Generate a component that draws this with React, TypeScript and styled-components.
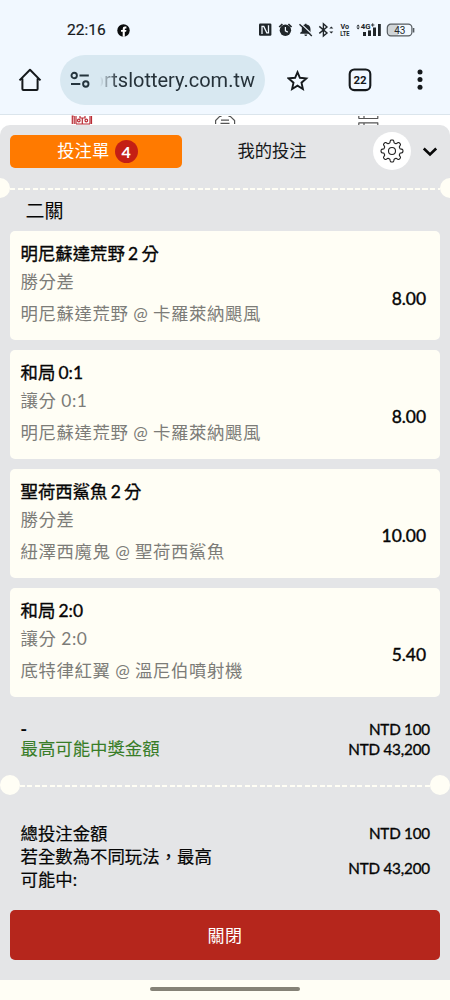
import React from 'react';
import styled, { createGlobalStyle } from 'styled-components';

const GlobalStyle = createGlobalStyle`
  * { box-sizing: border-box; }
  body { margin: 0; background: #fffef5; }
`;

const Screen = styled.div`
  width: 450px;
  height: 1000px;
  overflow: hidden;
  display: flex;
  flex-direction: column;
  background: #fffef5;
  font-family: Lato, 'Noto Sans CJK TC', sans-serif;
  color: #050505;
`;

const StatusBar = styled.div`
  height: 55px;
  flex: none;
  padding: 5px 34px 0 67px;
  display: flex;
  align-items: center;
  background: #f1f8ff;
  color: #161a1d;
`;

const Clock = styled.span`
  font: 400 15.5px/20px Roboto, sans-serif;
  -webkit-text-stroke: 0.2px currentColor;
  width: 50px;
`;

const StatusIcons = styled.svg`
  display: block;
  margin-left: auto;
`;

const Toolbar = styled.div`
  height: 60px;
  flex: none;
  display: flex;
  align-items: flex-start;
  background: #f1f8ff;
  color: #15191c;
  border-bottom: 1px solid #dbe5ec;
  svg { display: block; flex: none; }
`;

const HomeSlot = styled.div`
  width: 60px;
  padding: 12px 0 0 18px;
`;

const AddressPill = styled.div`
  width: 205px;
  height: 50px;
  border-radius: 25px;
  background: #d8e8f1;
  display: flex;
  align-items: center;
  padding-left: 10px;
`;

const Address = styled.span`
  margin-left: 10px;
  width: 155px;
  overflow: hidden;
  display: flex;
  justify-content: flex-end;
  white-space: nowrap;
  font: 400 20px/28px Roboto, sans-serif;
  color: #26323a;
  mask-image: linear-gradient(90deg, transparent 0, #000 18px);
`;

const ActionSlot = styled.div<{ $left: number; $top: number }>`
  padding-top: ${(p) => p.$top}px;
  margin-left: ${(p) => p.$left}px;
`;

const PageStrip = styled.div`
  height: 20px;
  margin-bottom: -10px;
  flex: none;
  background: #fff;
  svg { display: block; }
`;

const Sheet = styled.main`
  position: relative;
  height: 855px;
  flex: none;
  display: flex;
  flex-direction: column;
  border-radius: 10px 10px 0 0;
  background: #e4e5e7;
`;

const Tabs = styled.div`
  display: flex;
  align-items: center;
  height: 53px;
  padding: 0 10px 1px;
`;

const Tab = styled.button<{ $active?: boolean }>`
  border: 0;
  width: ${(p) => (p.$active ? 172 : 180)}px;
  height: 33px;
  border-radius: 5px;
  display: flex;
  justify-content: center;
  align-items: center;
  gap: 5.5px;
  background: ${(p) => (p.$active ? '#ff7a00' : 'transparent')};
  color: ${(p) => (p.$active ? '#fff' : '#16181a')};
  font: 400 17.3px/24px Lato, 'Noto Sans CJK TC', sans-serif;
  padding: 0 0 0 ${(p) => (p.$active ? 3 : 0)}px;
`;

const Count = styled.span`
  width: 23px;
  height: 23px;
  border-radius: 50%;
  background: #c41f14;
  font: 700 16px/23px Lato, sans-serif;
  text-align: center;
`;

const SettingsButton = styled.button`
  border: 0;
  padding: 0;
  width: 38px;
  height: 38px;
  border-radius: 50%;
  background: #fff;
  display: flex;
  align-items: center;
  justify-content: center;
  margin-left: 11px;
`;

const CollapseButton = styled.button`
  border: 0;
  padding: 0;
  background: none;
  display: flex;
  margin-left: 11px;
`;

const Perforation = styled.div<{ $inset: number }>`
  height: 20px;
  flex: none;
  display: flex;
  align-items: center;
  margin: 0 ${(p) => p.$inset}px;
  &::before, &::after {
    content: '';
    width: 20px;
    height: 20px;
    flex: none;
    border-radius: 50%;
    background: #fffef5;
  }
`;

const Dashes = styled.div`
  flex: 1;
  height: 2.5px;
  margin-top: 2px;
  background: repeating-linear-gradient(90deg, #fffef5 0 5px, transparent 5px 7.5px);
`;

const GroupTitle = styled.h2`
  margin: 0;
  padding: 0 25.5px;
  height: 33px;
  font-size: 19px;
  font-weight: 400;
  line-height: 25px;
`;

const BetList = styled.div`
  display: flex;
  flex-direction: column;
  gap: 10px;
  padding: 0 10px;
`;

const BetCard = styled.article`
  height: 108.9px;
  flex: none;
  border-radius: 5px;
  background: #fffef5;
  display: flex;
  justify-content: space-between;
  padding: 10px 14px 0 10.5px;
`;

const Pick = styled.div`
  font-size: 17.4px;
  line-height: 26px;
  word-spacing: -1.2px;
  -webkit-text-stroke: 0.35px currentColor;
`;

const Detail = styled.div<{ $gap?: number }>`
  margin-top: ${(p) => p.$gap ?? 1}px;
  font-size: 17.4px;
  line-height: 28px;
  letter-spacing: 0.6px;
  word-spacing: -0.3px;
  color: #7c7c78;
`;

const Odds = styled.div`
  padding-top: 44.5px;
  font-size: 17.4px;
  line-height: 26px;
  -webkit-text-stroke: 0.4px currentColor;
`;

const SummaryRow = styled.div<{ $height: number }>`
  height: ${(p) => p.$height}px;
  padding: 0 20px 0 20.5px;
  display: flex;
  align-items: center;
  justify-content: space-between;
`;

const Label = styled.div<{ $green?: boolean; $strong?: boolean }>`
  width: 200px;
  font-size: 17.4px;
  font-weight: ${(p) => (p.$strong ? 700 : 400)};
  line-height: 23px;
  color: ${(p) => (p.$green ? '#387d28' : 'inherit')};
  -webkit-text-stroke: ${(p) => (p.$green ? 0.1 : 0.2)}px currentColor;
`;

const Amount = styled.div`
  font-size: 15.2px;
  line-height: 20px;
  white-space: nowrap;
  word-spacing: -0.3px;
  letter-spacing: -0.15px;
  -webkit-text-stroke: 0.35px currentColor;
`;

const Summary = styled.section<{ $top: number; $bottom: number }>`
  padding: ${(p) => p.$top}px 0 ${(p) => p.$bottom}px;
`;

const CloseButton = styled.button`
  border: 0;
  margin: 0 10px;
  height: 50px;
  border-radius: 5px;
  background: #b5261c;
  color: #fff;
  font: 400 17px/50px Lato, 'Noto Sans CJK TC', sans-serif;
  letter-spacing: 0.5px;
`;

const NavHandle = styled.div`
  width: 150px;
  height: 4px;
  margin: 7px auto 0;
  border-radius: 2px;
  background: #858277;
`;

const bets = [
  { pick: '明尼蘇達荒野 2 分', market: '勝分差', match: '明尼蘇達荒野 @ 卡羅萊納颶風', odds: '8.00' },
  { pick: '和局 0:1', market: '讓分 0:1', match: '明尼蘇達荒野 @ 卡羅萊納颶風', odds: '8.00' },
  { pick: '聖荷西鯊魚 2 分', market: '勝分差', match: '紐澤西魔鬼 @ 聖荷西鯊魚', odds: '10.00' },
  { pick: '和局 2:0', market: '讓分 2:0', match: '底特律紅翼 @ 溫尼伯噴射機', odds: '5.40' },
];

const gearPath = (() => {
  const points: string[] = [];
  for (let i = 0; i <= 160; i += 1) {
    const a = (i / 160) * Math.PI * 2;
    const wave = Math.tanh(2.2 * Math.cos(a * 8)) / Math.tanh(2.2);
    const r = 9.6 + 1.35 * wave;
    points.push(`${(12 + r * Math.sin(a)).toFixed(2)} ${(12 - r * Math.cos(a)).toFixed(2)}`);
  }
  return `M${points.join('L')}Z`;
})();

export default function App() {
  return (
    <Screen>
      <GlobalStyle />
      <StatusBar>
        <Clock>22:16</Clock>
        <svg width="13" height="13" viewBox="0 0 13 13">
          <circle cx="6.5" cy="6.5" r="6.2" fill="#0b0d0e" />
          <path d="M5.7 12.7V7.8H4V6H5.7V5Q5.7 2.6 8 2.6H9.4V4.4H8.5Q7.8 4.4 7.8 5.1V6H9.4L9.1 7.8H7.8V12.7Z" fill="#fff" />
        </svg>
        <StatusIcons width="158" height="18" viewBox="0 0 158 18">
          <g fill="#20262a">
            <rect x="1" y="2.5" width="12.4" height="12.2" rx="1.2" />
            <path d="M4 13V5.4H5.8L8.8 11.8H10.5V4.2" fill="none" stroke="#f1f8ff" strokeWidth="1.3" />
            <circle cx="27.4" cy="9.3" r="5.7" />
            <path d="M21.2 6L24.4 3M33.6 6L30.4 3" stroke="#20262a" strokeWidth="1.7" />
            <path d="M27.4 6.1V9.8L29.8 11.1" fill="none" stroke="#f1f8ff" strokeWidth="1.2" />
            <path d="M44.5 4.6Q46.1 3.7 46.9 3.6V2.8H48.5V3.6Q52.5 4.4 52.5 8.3V11.4L54 12.8H42.2V11.8L43.8 10.5V7.8Q43.8 5.8 44.5 4.6ZM46.3 13.4H49.3Q49 15 47.8 15T46.3 13.4Z" />
            <path d="M42.6 2.4L54.8 14" stroke="#f1f8ff" strokeWidth="1.2" />
            <path d="M41.5 3.2L53.8 14.9" stroke="#20262a" strokeWidth="1.4" />
            <path d="M61.3 5.4L69 12L65.4 15V2.8L69 6L61.3 12.4" fill="none" stroke="#20262a" strokeWidth="1.4" />
            <path d="M71.3 7.6L73.3 5.4L75.3 7.6ZM71.3 10.4L73.3 12.6L75.3 10.4ZM98.4 5.4L100.1 3.4L101.8 5.4ZM98.4 6.6L100.1 8.6L101.8 6.6Z" />
            <rect x="105" y="11" width="3" height="4" />
            <rect x="110" y="9.4" width="3" height="5.6" />
            <rect x="115" y="6.5" width="3" height="8.5" />
            <rect x="120" y="3" width="2.8" height="12" />
          </g>
          <g fontFamily="Roboto, sans-serif" fontWeight="700" fill="#20262a">
            <text x="82.5" y="8.2" fontSize="7.2">Vo</text>
            <text x="82.3" y="15.2" fontSize="7.2" textLength="9.2" lengthAdjust="spacingAndGlyphs">LTE</text>
            <text x="102.8" y="8.4" fontSize="7.8">4G</text>
          </g>
          <path d="M113 4H116.4M114.7 2.3V5.7" stroke="#20262a" strokeWidth="0.9" />
          <path d="M133.2 3.4H140V14.6H133.2Q129.4 14.6 129.4 11V7Q129.4 3.4 133.2 3.4Z" fill="#d0d5d8" />
          <rect x="129.3" y="3.2" width="24.6" height="11.6" rx="3.6" fill="none" stroke="#555b60" strokeWidth="1.2" />
          <path d="M155.6 7V11.5" stroke="#555b60" strokeWidth="1.5" />
          <text x="141.8" y="12.6" fontSize="10" fontFamily="Roboto, sans-serif" fill="#25292c" textAnchor="middle">43</text>
        </StatusIcons>
      </StatusBar>

      <Toolbar>
        <HomeSlot>
          <svg width="24" height="26" viewBox="0 0 24 26">
            <path d="M1.5 13.4L12 2.8L22.5 13.4M4.4 11.5V22Q4.4 23 5.4 23H18.6Q19.6 23 19.6 22V11.5" fill="none" stroke="currentColor" strokeWidth="2" strokeLinejoin="round" />
          </svg>
        </HomeSlot>
        <AddressPill>
          <svg width="20" height="18" viewBox="0 0 20 18">
            <g fill="none" stroke="#24343d" strokeWidth="1.9">
              <circle cx="4.2" cy="4.5" r="2.7" />
              <circle cx="15.8" cy="13" r="2.7" />
              <path d="M9.5 4.5H18.8M1 13H10.3" />
            </g>
          </svg>
          <Address>ortslottery.com.tw</Address>
        </AddressPill>
        <ActionSlot $left={22} $top={15}>
          <svg width="22" height="22" viewBox="0 0 22 22">
            <path d="M10.5 2.2L12.9 7.8L19.3 8.4L14.5 12.7L15.9 19L10.5 15.7L5.1 19L6.5 12.7L1.7 8.4L8.1 7.8Z" fill="none" stroke="currentColor" strokeWidth="1.9" />
          </svg>
        </ActionSlot>
        <ActionSlot $left={39} $top={13}>
          <svg width="24" height="24" viewBox="0 0 24 24">
            <rect x="1.7" y="1.5" width="20.6" height="20.6" rx="4.6" fill="none" stroke="currentColor" strokeWidth="2.1" />
            <text x="12" y="16" textAnchor="middle" fontSize="11.5" fontWeight="700" fontFamily="Roboto, sans-serif" fill="currentColor">22</text>
          </svg>
        </ActionSlot>
        <ActionSlot $left={45} $top={13}>
          <svg width="6" height="24" viewBox="0 0 6 24" fill="currentColor">
            <circle cx="3" cy="4" r="2.5" />
            <circle cx="3" cy="11.6" r="2.5" />
            <circle cx="3" cy="19.2" r="2.5" />
          </svg>
        </ActionSlot>
      </Toolbar>

      <PageStrip>
        <svg width="450" height="10" viewBox="0 0 450 10" fill="none">
          <g stroke="#b92b34" strokeWidth="1.2">
            <path d="M73.5 1H72.3V9M76 1V9M74.2 1V9M90 1V9M91.5 1V9M76 9H90M80 1V3H85V1M82.3 3V9" />
            <circle cx="78.8" cy="5.5" r="1.3" />
            <circle cx="86.3" cy="5.5" r="1.3" />
          </g>
          <g stroke="#555" strokeWidth="1.2">
            <path d="M215.6 9V5.5L219.5 1.5H221.5M234.6 9V5.5L230.5 1.5H228.5M221 5.2H229M220.5 8.3H229.5" />
            <path d="M358.5 3.5H378.2M358.5 7.8H378.2M358.8 1V3.5M364 1V3.5M377.8 1V3.5M358.8 7.8V10M364 7.8V10M377.8 7.8V10" />
          </g>
        </svg>
      </PageStrip>

      <Sheet>
        <Tabs>
          <Tab $active>
            投注單
            <Count>4</Count>
          </Tab>
          <Tab>我的投注</Tab>
          <SettingsButton aria-label="設定">
            <svg width="24" height="24" viewBox="0 0 24 24" fill="none" stroke="#222" strokeWidth="1.1">
              <path d={gearPath} />
              <circle cx="12" cy="12" r="3.5" />
            </svg>
          </SettingsButton>
          <CollapseButton aria-label="收合">
            <svg width="16" height="12" viewBox="0 0 16 12">
              <path d="M1.8 3.5L8 9.5L14.2 3.5" fill="none" stroke="#080808" strokeWidth="2.6" />
            </svg>
          </CollapseButton>
        </Tabs>
        <Perforation $inset={-10}>
          <Dashes />
        </Perforation>
        <GroupTitle>二關</GroupTitle>
        <BetList>
          {bets.map((bet, i) => (
            <BetCard key={i}>
              <div>
                <Pick>{bet.pick}</Pick>
                <Detail>{bet.market}</Detail>
                <Detail $gap={4}>{bet.match}</Detail>
              </div>
              <Odds>{bet.odds}</Odds>
            </BetCard>
          ))}
        </BetList>
        <Summary $top={22} $bottom={16.6}>
          <SummaryRow $height={20}>
            <Label $strong>-</Label>
            <Amount>NTD 100</Amount>
          </SummaryRow>
          <SummaryRow $height={20}>
            <Label $green>最高可能中獎金額</Label>
            <Amount>NTD 43,200</Amount>
          </SummaryRow>
        </Summary>
        <Perforation $inset={0}>
          <Dashes />
        </Perforation>
        <Summary $top={26.8} $bottom={19}>
          <SummaryRow $height={23}>
            <Label>總投注金額</Label>
            <Amount>NTD 100</Amount>
          </SummaryRow>
          <SummaryRow $height={46}>
            <Label>若全數為不同玩法，最高可能中:</Label>
            <Amount>NTD 43,200</Amount>
          </SummaryRow>
        </Summary>
        <CloseButton>關閉</CloseButton>
      </Sheet>
      <NavHandle />
    </Screen>
  );
}
